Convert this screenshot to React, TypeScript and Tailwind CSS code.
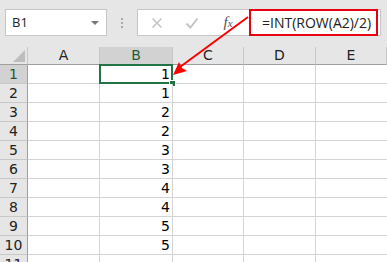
import clsx from 'clsx'

const values = [1, 1, 2, 2, 3, 3, 4, 4, 5, 5, null]
const cols = ['A', 'B', 'C', 'D', 'E']

const cellFont = { fontFamily: '"DejaVu Sans", sans-serif' }

// Formula bar buttons: cancel, enter, insert function
const CancelIcon = () => (
  <svg width="12" height="12" viewBox="0 0 12 12">
    <path d="M1.5 1.5l9 9M10.5 1.5l-9 9" stroke="#c4c4c4" strokeWidth="1.6" />
  </svg>
)

const EnterIcon = () => (
  <svg width="14" height="12" viewBox="0 0 14 12">
    <path d="M1.5 6.5l4 4 7-9" stroke="#c4c4c4" strokeWidth="2" fill="none" />
  </svg>
)

export default function App() {
  return (
    <div className="relative h-[262px] w-[387px] overflow-hidden bg-[#e6e6e6]" style={{ fontFamily: '"Open Sans", sans-serif' }}>
      {/* name box + formula bar */}
      <div className="flex h-[47px] items-start pt-[9px]">
        <div className="ml-[5px] flex h-[27px] w-[102px] items-center justify-between border border-[#c6c6c6] bg-white pl-[6px] pr-[7px]">
          <span className="text-[13px] text-[#222]">B1</span>
          <span className="h-0 w-0 border-x-[4px] border-t-[4px] border-x-transparent border-t-[#777]" />
        </div>
        <div className="flex h-[27px] w-[30px] flex-col items-center justify-center gap-[2px]">
          <span className="h-[2px] w-[2px] bg-[#aaa]" />
          <span className="h-[2px] w-[2px] bg-[#aaa]" />
          <span className="h-[2px] w-[2px] bg-[#aaa]" />
        </div>
        <div className="flex h-[27px] w-[244px] items-center border border-[#c6c6c6] bg-white">
          <div className="flex w-[36px] justify-center pl-[1px]"><CancelIcon /></div>
          <div className="flex w-[36px] justify-center"><EnterIcon /></div>
          <div className="flex w-[36px] justify-center">
            <span className="text-[15px] italic leading-none text-[#555]" style={{ fontFamily: '"Liberation Serif", serif' }}>
              f<span className="text-[11px]">x</span>
            </span>
          </div>
          <div className="flex-1" />
        </div>
      </div>

      {/* sheet grid */}
      <div className="grid grid-cols-[28px_72px_73px_71px_72px_1fr]" style={cellFont}>
        <div className="relative h-[18px] border-b border-r border-b-[#9f9f9f] border-r-[#c8c8c8] bg-[#e6e6e6]">
          <span className="absolute bottom-[2px] right-[2px] h-0 w-0 border-b-[12px] border-l-[12px] border-b-[#bdbdbd] border-l-transparent" />
        </div>
        {cols.map((c) => (
          <div
            key={c}
            className={clsx(
              'flex h-[18px] items-center justify-center border-b border-r border-b-[#9f9f9f] border-r-[#c8c8c8] text-[14px]',
              c === 'B' ? 'bg-[#d2d2d2] text-[#1e5b3a]' : 'bg-[#e6e6e6] text-[#222]'
            )}
          >
            {c}
          </div>
        ))}

        {values.map((v, i) => (
          <Row key={i} n={i + 1} value={v} />
        ))}
      </div>

      {/* annotation: red box around formula and arrow */}
      <div className="absolute left-[249px] top-[9px] flex h-[27px] w-[129px] items-center border-2 border-[#e60012] bg-white pl-[11px]">
        <span className="text-[14px] text-[#222]">=INT(ROW(A2)/2)</span>
      </div>
      <svg className="pointer-events-none absolute left-0 top-0" width="387" height="262">
        <line x1="248" y1="17" x2="180" y2="67" stroke="#f00" strokeWidth="2" />
        <polygon points="173,75 187,71 182,68 179,62" fill="#f00" />
      </svg>
    </div>
  )
}

function Row({ n, value }: { n: number; value: number | null }) {
  const selected = n === 1
  return (
    <>
      <div
        className={clsx(
          'flex h-[19px] items-center justify-center border-b border-r border-b-[#c8c8c8] border-r-[#9f9f9f] text-[14px]',
          selected ? 'bg-[#d2d2d2] text-[#1e5b3a]' : 'bg-[#e6e6e6] text-[#222]'
        )}
      >
        {n}
      </div>
      <div className="h-[19px] border-b border-r border-[#d4d4d4] bg-white" />
      <div className="relative flex h-[19px] items-center justify-end border-b border-r border-[#d4d4d4] bg-white pr-[2px] text-[14px] text-black">
        {value}
        {selected && (
          <>
            <span className="absolute -left-[1px] -top-[1px] h-[20px] w-[74px] border-2 border-[#217346]" />
            <span className="absolute -bottom-[4px] -right-[4px] h-[7px] w-[7px] border border-white bg-[#217346]" />
          </>
        )}
      </div>
      <div className="h-[19px] border-b border-r border-[#d4d4d4] bg-white" />
      <div className="h-[19px] border-b border-r border-[#d4d4d4] bg-white" />
      <div className="h-[19px] border-b border-[#d4d4d4] bg-white" />
    </>
  )
}
